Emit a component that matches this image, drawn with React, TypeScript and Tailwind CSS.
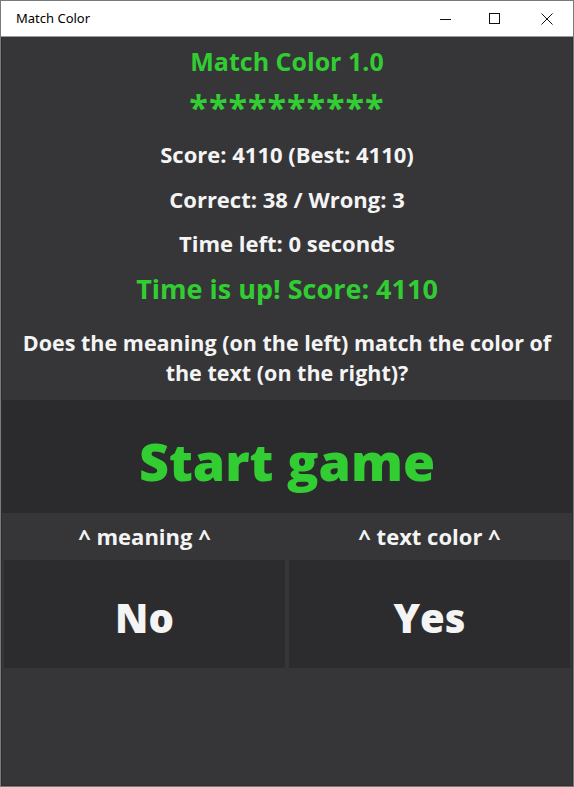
import React from 'react';

const font = { fontFamily: '"Open Sans", "Noto Sans", sans-serif' };

function TitleBar() {
  return (
    <div className="flex h-[36px] items-center bg-white border-b border-[#9a9a9a]">
      <span className="pl-[15px] text-[13px] text-black" style={{ fontFamily: '"Noto Sans", sans-serif' }}>Match Color</span>
      <div className="ml-auto flex h-full">
        <div className="flex w-[46px] items-center justify-center">
          <svg width="12" height="12" viewBox="0 0 12 12"><path d="M0 6.5h11" stroke="#111" strokeWidth="1" /></svg>
        </div>
        <div className="flex w-[52px] items-center justify-center">
          <svg width="12" height="12" viewBox="0 0 12 12"><rect x="0.5" y="0.5" width="10" height="10" fill="none" stroke="#111" strokeWidth="1" /></svg>
        </div>
        <div className="flex w-[52px] items-center justify-center">
          <svg width="12" height="12" viewBox="0 0 12 12"><path d="M0.5 0.5l11 11M11.5 0.5l-11 11" stroke="#111" strokeWidth="1" /></svg>
        </div>
      </div>
    </div>
  );
}

export default function App() {
  return (
    <div className="flex h-[787px] w-[574px] flex-col border border-[#7a7a7a] bg-[#363638]" style={font}>
      <TitleBar />
      <div className="flex flex-1 flex-col border-x border-b border-[#2e2e30]">
        <div className="flex flex-col items-center font-bold">
          <div className="text-[25px] leading-[48px] text-[#32cd32]">Match Color 1.0</div>
          <div className="pt-[3px] text-[34px] leading-[39px] tracking-[1px] text-[#32cd32]">**********</div>
          <div className="text-[22px] leading-[54px] text-[#f4f4f4]">Score: 4110 (Best: 4110)</div>
          <div className="text-[22px] leading-[36px] text-[#f4f4f4]">Correct: 38 / Wrong: 3</div>
          <div className="text-[22px] leading-[52px] text-[#f4f4f4]">Time left: 0 seconds</div>
          <div className="text-[27px] leading-[40px] text-[#32cd32]">Time is up! Score: 4110</div>
          <div className="mt-[19px] px-[12px] text-center text-[21.5px] leading-[30px] text-[#f4f4f4]">
            Does the meaning (on the left) match the color of the text (on the right)?
          </div>
        </div>
        <div className="mt-[12px] flex h-[113px] items-center justify-center bg-[#2b2b2d] pt-[8px]">
          <span className="text-[52px] font-extrabold leading-none text-[#32cd32]">Start game</span>
        </div>
        <div className="grid h-[47px] grid-cols-2 items-center text-center text-[22px] font-bold text-[#f4f4f4]">
          <span>^ meaning ^</span>
          <span>^ text color ^</span>
        </div>
        <div className="grid grid-cols-2 gap-[4px] px-[2px]">
          <button className="flex h-[108px] items-center justify-center bg-[#2c2c2e] pt-[7px] text-[40px] font-extrabold text-[#f4f4f4]">No</button>
          <button className="flex h-[108px] items-center justify-center bg-[#2c2c2e] pt-[7px] text-[40px] font-extrabold text-[#f4f4f4]">Yes</button>
        </div>
      </div>
    </div>
  );
}
